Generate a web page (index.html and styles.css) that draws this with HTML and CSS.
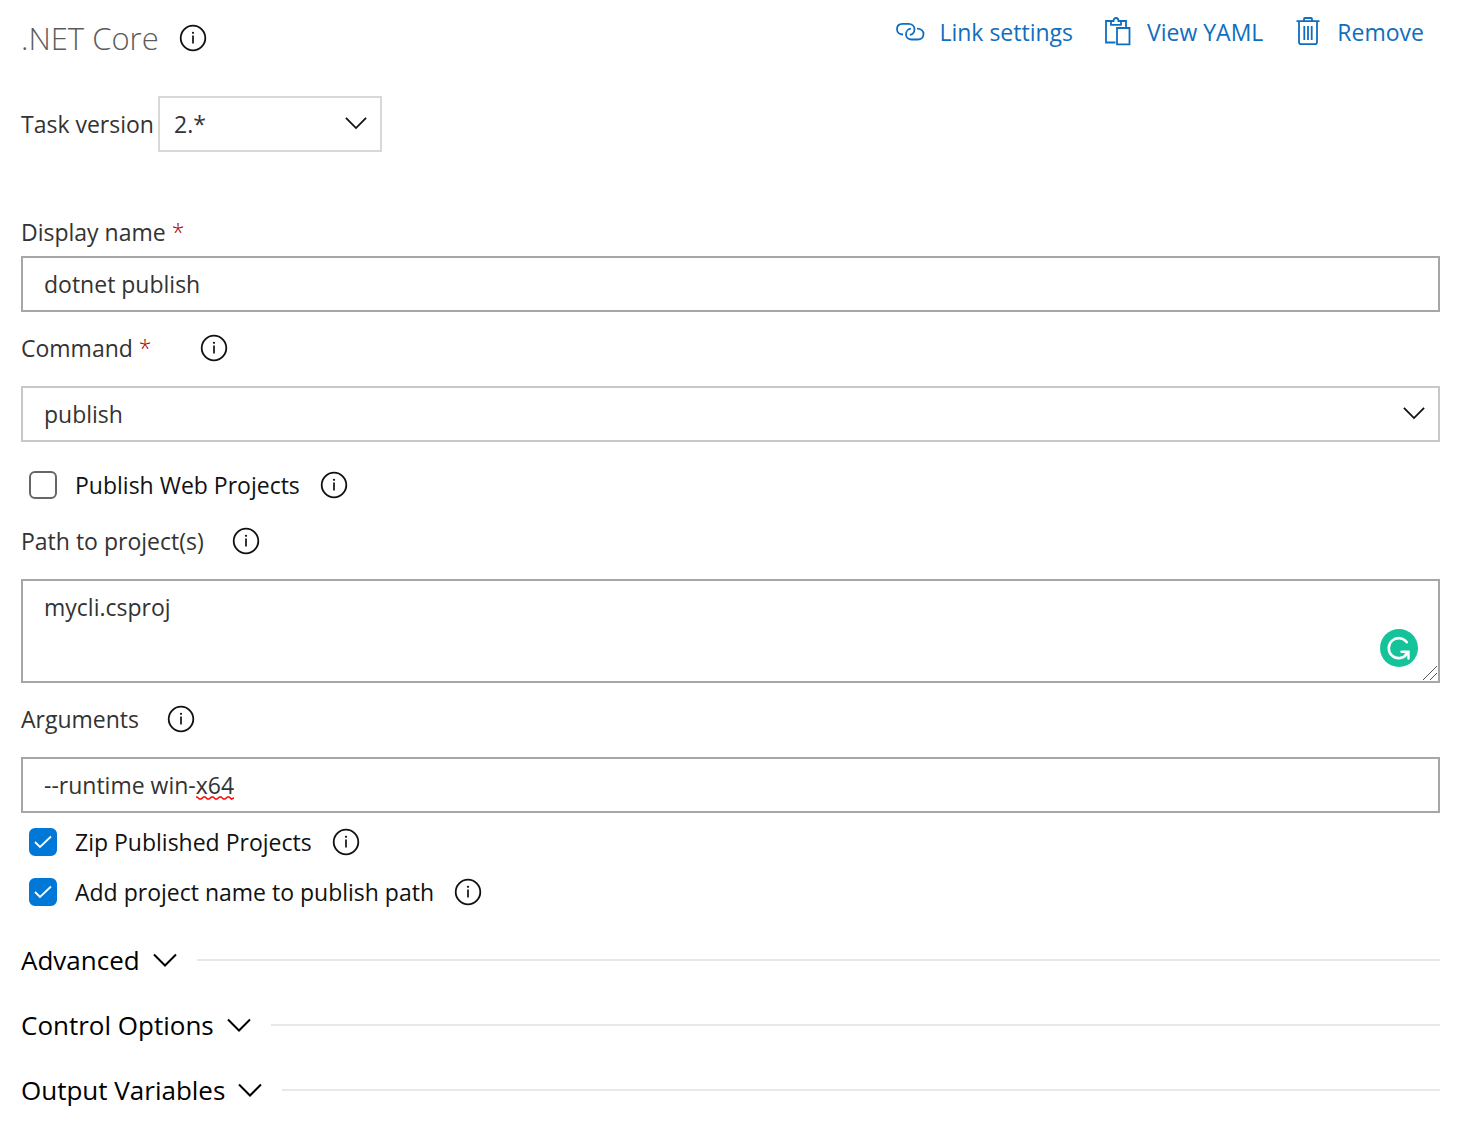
FILE: index.html
```html
<!DOCTYPE html>
<html lang="en">
<head>
  <meta charset="UTF-8">
  <meta name="viewport" content="width=device-width, initial-scale=1.0">
  <title>.NET Core</title>
  <link rel="stylesheet" href="styles.css">
</head>
<body>
  <!-- shared icons -->
  <svg class="sprite" aria-hidden="true">
    <symbol id="info" viewBox="0 0 28 28">
      <circle cx="14" cy="14" r="12.3" fill="none" stroke="currentColor" stroke-width="1.8"/>
      <path d="M14 11.5v8" stroke="currentColor" stroke-width="1.7"/>
      <circle cx="14" cy="8.8" r="1.1" fill="currentColor"/>
    </symbol>
    <symbol id="chevron" viewBox="0 0 24 24">
      <path d="M1 6.5l11 11 11-11" fill="none" stroke="currentColor" stroke-width="2"/>
    </symbol>
  </svg>

  <main class="task">
    <header class="task-header">
      <div class="heading">
        <h1>.NET Core</h1>
        <button type="button" class="info" aria-label="About this task"><svg><use href="#info"/></svg></button>
      </div>
      <nav class="actions">
        <a href="#link">
          <svg viewBox="0 0 30 30" fill="none" stroke="currentColor" stroke-width="1.8">
            <path d="M8 17.500C4.500 17.500 2 15.500 2 12.300C2 9 4.200 6.900 7.500 6.900H13.500C17 6.900 19.500 9.300 19.500 12.300C19.500 15.300 17.500 17.600 14.800 17.800"/>
            <path d="M22 11.700C26 11.700 28.500 14 28.500 17.100C28.500 20.300 26 22.500 22.800 22.500H16.500C13.500 22.500 11 20.400 11 17.500C11 14.300 13 11.900 15.900 11.700"/>
          </svg>
          Link settings
        </a>
        <a href="#yaml">
          <svg viewBox="0 0 30 30" fill="none" stroke="currentColor" stroke-width="1.8">
            <path d="M12.500 25.500H3V4H8M18 4H23V10"/>
            <path d="M8 7.800V4H10.500C10.500 2 11.500 1 13 1S15.500 2 15.500 4H18V7.800Z"/>
            <path d="M14 11H26.500V27.300H14Z"/>
          </svg>
          View YAML
        </a>
        <a href="#remove">
          <svg viewBox="0 0 30 30" fill="none" stroke="currentColor" stroke-width="1.8">
            <path d="M3.500 4.200H26.500M6 4.200V25C6 26.500 6.700 27.200 8 27.200H22C23.300 27.200 24 26.500 24 25V4.200M11 4V2C11 1.300 11.400 1 12 1H18C18.600 1 19 1.300 19 2V4"/>
            <path d="M11.300 9V23M15 9V23M18.700 9V23"/>
          </svg>
          Remove
        </a>
      </nav>
    </header>

    <form>
      <div class="version">
        <label for="version">Task version</label>
        <div class="select">
          <select id="version"><option>2.*</option></select>
          <svg class="chevron"><use href="#chevron"/></svg>
        </div>
      </div>

      <div class="field compact">
        <div class="label-row">
          <label for="displayName">Display name <span class="required">*</span></label>
        </div>
        <input type="text" id="displayName" value="dotnet publish">
      </div>

      <div class="field">
        <div class="label-row wide">
          <label for="command">Command <span class="required">*</span></label>
          <button type="button" class="info" aria-label="About Command"><svg><use href="#info"/></svg></button>
        </div>
        <div class="select">
          <select id="command"><option>publish</option></select>
          <svg class="chevron"><use href="#chevron"/></svg>
        </div>
      </div>

      <div class="check first">
        <input type="checkbox" id="webProjects">
        <label for="webProjects">Publish Web Projects</label>
        <button type="button" class="info" aria-label="About Publish Web Projects"><svg><use href="#info"/></svg></button>
      </div>

      <div class="field">
        <div class="label-row">
          <label for="projects">Path to project(s)</label>
          <button type="button" class="info" aria-label="About Path to project(s)"><svg><use href="#info"/></svg></button>
        </div>
        <div class="editor">
          <textarea id="projects" spellcheck="false">mycli.csproj</textarea>
          <svg class="badge" viewBox="0 0 38 38" aria-hidden="true">
            <circle cx="19" cy="19" r="19" fill="#15c39a"/>
            <path d="M26.800 13.200A10 10 0 1 0 26.500 25.500" fill="none" stroke="#fff" stroke-width="2.600" stroke-linecap="round"/>
            <path d="M21.500 22.800H28.500V29.500M28 23.300L25 26.300" fill="none" stroke="#fff" stroke-width="2.400" stroke-linecap="round"/>
          </svg>
          <svg class="grip" viewBox="0 0 16 16" aria-hidden="true">
            <path d="M1 15L15 1M8 15L15 8" stroke="#555" stroke-width="1"/>
          </svg>
        </div>
      </div>

      <div class="field">
        <div class="label-row">
          <label for="arguments">Arguments</label>
          <button type="button" class="info" aria-label="About Arguments"><svg><use href="#info"/></svg></button>
        </div>
        <div class="editor">
          <input type="text" id="arguments" value="--runtime win-x64" spellcheck="false">
          <svg class="squiggle" viewBox="0 0 38 4" aria-hidden="true">
            <path d="M0 1L1 1L3.500 3L5 3L7.500 1L9 1L11.500 3L13 3L15.500 1L17 1L19.500 3L21 3L23.500 1L25 1L27.500 3L29 3L31.500 1L33 1L35.500 3L38 2" fill="none" stroke="#f00" stroke-width="1.600"/>
          </svg>
        </div>
      </div>

      <div class="check">
        <input type="checkbox" id="zip" checked>
        <label for="zip">Zip Published Projects</label>
        <button type="button" class="info" aria-label="About Zip Published Projects"><svg><use href="#info"/></svg></button>
      </div>
      <div class="check">
        <input type="checkbox" id="addName" checked>
        <label for="addName">Add project name to publish path</label>
        <button type="button" class="info" aria-label="About Add project name to publish path"><svg><use href="#info"/></svg></button>
      </div>
    </form>

    <div class="sections">
      <button type="button" class="section" aria-expanded="false">Advanced <svg><use href="#chevron"/></svg></button>
      <button type="button" class="section" aria-expanded="false">Control Options <svg><use href="#chevron"/></svg></button>
      <button type="button" class="section" aria-expanded="false">Output Variables <svg><use href="#chevron"/></svg></button>
    </div>
  </main>
</body>
</html>
```
FILE: styles.css
```css
:root {
  --text: #333;
  --link: #106ebe;
  --blue: #0078d7;
  --border: #a6a6a6;
  --border-light: #c8c8c8;
}
* { box-sizing: border-box; margin: 0; padding: 0; }
body {
  background: #fff;
  color: var(--text);
  font-family: 'Segoe UI', 'Open Sans', sans-serif;
  font-size: 23px;
  line-height: 32px;
}
input, select, textarea, button { font: inherit; color: inherit; }
.sprite { display: none; }
.task { padding: 16px 28px 16px 21px; }

/* header */
.task-header { display: flex; justify-content: space-between; align-items: flex-start; }
.heading { display: flex; align-items: center; gap: 20px; height: 44px; }
h1 { font-size: 31px; font-weight: 300; line-height: 40px; color: #5c5c5c; }
.actions { display: flex; gap: 30px; padding-right: 16px; }
.actions a { display: flex; align-items: center; gap: 14px; color: var(--link); text-decoration: none; }
.actions svg { width: 30px; height: 30px; }
.info {
  width: 28px; height: 28px;
  border: none; background: none;
  color: #111; cursor: pointer;
}
.info svg { display: block; width: 28px; height: 28px; }

/* fields */
.version { display: flex; align-items: center; gap: 4px; margin: 36px 0 64px; }
.version .select { width: 224px; }
.version select { border-color: #d8d8d8; padding-left: 14px; }
.field { margin-top: 20px; }
.label-row { display: flex; align-items: center; gap: 28px; margin-bottom: 22px; }
.label-row.wide { gap: 48px; }
.compact .label-row { margin-bottom: 8px; }
.required { color: #a80000; font-weight: 300; }
input[type="text"], select, textarea {
  display: block; width: 100%; height: 56px;
  padding: 0 21px;
  border: 2px solid var(--border);
  border-radius: 0; background: #fff;
  outline: none;
}
textarea { height: 104px; padding-top: 10px; resize: none; }
select { appearance: none; border-color: var(--border-light); }
.select, .editor { position: relative; }
.chevron {
  position: absolute; right: 15px; top: 16px;
  width: 22px; height: 22px;
  color: #111; pointer-events: none;
}
.badge { position: absolute; right: 22px; bottom: 16px; width: 38px; height: 38px; }
.grip { position: absolute; right: 2px; bottom: 2px; width: 16px; height: 16px; }
.squiggle { position: absolute; left: 175px; bottom: 13px; width: 38px; height: 4px; }

/* checkboxes */
.check { display: flex; align-items: center; margin-top: 18px; padding-left: 8px; color: #111; }
.field + .check { margin-top: 13px; }
.field + .check.first { margin: 27px 0 24px; }
.check input {
  appearance: none;
  width: 28px; height: 28px; margin-right: 18px;
  border: 2px solid #666; border-radius: 6px;
}
.check input:checked {
  border-color: var(--blue);
  background: var(--blue) url("data:image/svg+xml,%3Csvg xmlns='http://www.w3.org/2000/svg' viewBox='0 0 24 24'%3E%3Cpath d='M4 12l5 5L20 6.500' fill='none' stroke='white' stroke-width='1.800'/%3E%3C/svg%3E") center / 24px;
}
.check .info { margin-left: 20px; }

/* collapsed sections */
.sections { margin-top: 19px; }
.section {
  display: flex; align-items: center; width: 100%; height: 65px;
  border: none; background: none;
  font-size: 26px; color: #000; cursor: pointer;
}
.section svg { width: 24px; height: 24px; margin: 0 20px 0 13px; }
.section::after { content: ""; flex: 1; height: 2px; background: #e8e8e8; }
```
